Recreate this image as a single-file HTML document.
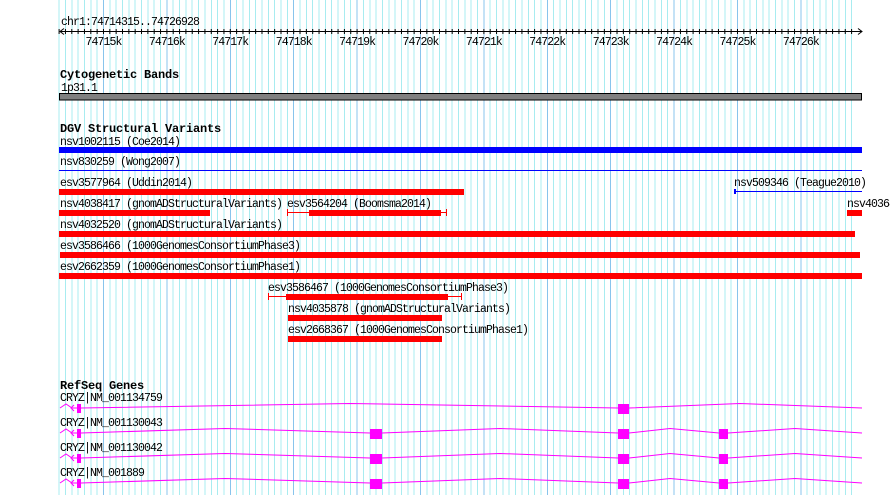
<!DOCTYPE html>
<html><head><meta charset="utf-8"><style>
html,body{margin:0;padding:0;background:#fff;width:890px;height:495px;overflow:hidden}
svg{display:block}
text{font-family:"Liberation Mono",monospace;font-size:11.5px;letter-spacing:-0.9px;fill:#000}
.t{font-weight:bold;font-size:12px;letter-spacing:-0.2px}
</style></head><body>
<svg width="890" height="495" viewBox="0 0 890 495">
<defs>
<path id="g" d="M59.1 0v495m6.34-495v495m6.34-495v495m6.34-495v495m6.34-495v495m6.34-495v495m6.34-495v495m6.34-495v495m6.34-495v495m6.34-495v495
m6.34-495v495m6.34-495v495m6.34-495v495m6.34-495v495m6.34-495v495m6.34-495v495m6.34-495v495m6.34-495v495m6.34-495v495m6.34-495v495
m6.34-495v495m6.34-495v495m6.34-495v495m6.34-495v495m6.34-495v495m6.34-495v495m6.34-495v495m6.34-495v495m6.34-495v495m6.34-495v495
m6.34-495v495m6.34-495v495m6.34-495v495m6.34-495v495m6.34-495v495m6.34-495v495m6.34-495v495m6.34-495v495m6.34-495v495m6.34-495v495
m6.34-495v495m6.34-495v495m6.34-495v495m6.34-495v495m6.34-495v495m6.34-495v495m6.34-495v495m6.34-495v495m6.34-495v495m6.34-495v495
m6.34-495v495m6.34-495v495m6.34-495v495m6.34-495v495m6.34-495v495m6.34-495v495m6.34-495v495m6.34-495v495m6.34-495v495m6.34-495v495
m6.34-495v495m6.34-495v495m6.34-495v495m6.34-495v495m6.34-495v495m6.34-495v495m6.34-495v495m6.34-495v495m6.34-495v495m6.34-495v495
m6.34-495v495m6.34-495v495m6.34-495v495m6.34-495v495m6.34-495v495m6.34-495v495m6.34-495v495m6.34-495v495m6.34-495v495m6.34-495v495
m6.34-495v495m6.34-495v495m6.34-495v495m6.34-495v495m6.34-495v495m6.34-495v495m6.34-495v495m6.34-495v495m6.34-495v495m6.34-495v495
m6.34-495v495m6.34-495v495m6.34-495v495m6.34-495v495m6.34-495v495m6.34-495v495m6.34-495v495m6.34-495v495m6.34-495v495m6.34-495v495
m6.34-495v495m6.34-495v495m6.34-495v495m6.34-495v495m6.34-495v495m6.34-495v495m6.34-495v495m6.34-495v495m6.34-495v495m6.34-495v495
m6.34-495v495m6.34-495v495m6.34-495v495m6.34-495v495m6.34-495v495m6.34-495v495m6.34-495v495m6.34-495v495m6.34-495v495m6.34-495v495
m6.34-495v495m6.34-495v495m6.34-495v495m6.34-495v495m6.34-495v495m6.34-495v495"/>
</defs>
<g shape-rendering="crispEdges">
<use href="#g" stroke="#a8ecf0" stroke-width="1" fill="none"/>
<path d="M103.5 0v495M166.9 0v495M230.3 0v495M293.7 0v495M357.1 0v495M420.5 0v495M483.9 0v495M547.3 0v495M610.7 0v495M674.1 0v495M737.5 0v495M800.9 0v495" stroke="#88c4ec" stroke-width="1"/>
<rect x="862" y="0" width="28" height="495" fill="#fff"/>
<path d="M60 31.5H862" stroke="#000"/>
<use href="#g" stroke="#000" stroke-width="1" fill="none" transform="translate(0,29) scale(1,0.0101)"/>
</g>
<path d="M64 28.5L60 31.5L64 34.5M858 28.5L862 31.5L858 34.5" stroke="#000" fill="none"/>
<text x="61" y="25">chr1:74714315..74726928</text>
<g text-anchor="middle">
<text x="103.5" y="45">74715k</text><text x="166.9" y="45">74716k</text><text x="230.3" y="45">74717k</text><text x="293.7" y="45">74718k</text><text x="357.1" y="45">74719k</text><text x="420.5" y="45">74720k</text><text x="483.9" y="45">74721k</text><text x="547.3" y="45">74722k</text><text x="610.7" y="45">74723k</text><text x="674.1" y="45">74724k</text><text x="737.5" y="45">74725k</text><text x="800.9" y="45">74726k</text>
</g>
<text class="t" x="60" y="78">Cytogenetic Bands</text>
<text x="61" y="91">1p31.1</text>
<rect x="59.5" y="93.5" width="802" height="6.5" fill="#808080" stroke="#000" stroke-width="1"/>

<text class="t" x="60" y="132">DGV Structural Variants</text>
<g shape-rendering="crispEdges">
<text x="60" y="145">nsv1002115 (Coe2014)</text>
<rect x="59" y="147" width="803" height="6" fill="#0000ff"/>
<text x="60" y="165">nsv830259 (Wong2007)</text>
<rect x="59" y="170" width="803" height="1" fill="#0000ff"/>
<text x="60" y="186">esv3577964 (Uddin2014)</text>
<rect x="59" y="189" width="405" height="6" fill="#ff0000"/>
<text x="734" y="186">nsv509346 (Teague2010)</text>
<rect x="734" y="191" width="128" height="1" fill="#0000ff"/>
<rect x="734" y="189" width="2" height="5" fill="#0000ff"/>
<text x="60" y="207">nsv4038417 (gnomADStructuralVariants)</text>
<rect x="59" y="210" width="151" height="6" fill="#ff0000"/>
<text x="287" y="207">esv3564204 (Boomsma2014)</text>
<rect x="287" y="212" width="160" height="1" fill="#ff0000"/>
<rect x="287" y="209" width="1" height="7" fill="#ff0000"/>
<rect x="446" y="209" width="1" height="7" fill="#ff0000"/>
<rect x="309" y="210" width="132" height="6" fill="#ff0000"/>
<text x="847" y="207">nsv40368</text>
<rect x="847" y="210" width="15" height="6" fill="#ff0000"/>
<text x="60" y="228">nsv4032520 (gnomADStructuralVariants)</text>
<rect x="59" y="231" width="796" height="6" fill="#ff0000"/>
<text x="60" y="249">esv3586466 (1000GenomesConsortiumPhase3)</text>
<rect x="60" y="252" width="800" height="6" fill="#ff0000"/>
<text x="60" y="270">esv2662359 (1000GenomesConsortiumPhase1)</text>
<rect x="59" y="273" width="803" height="6" fill="#ff0000"/>
<text x="268" y="291">esv3586467 (1000GenomesConsortiumPhase3)</text>
<rect x="268" y="296" width="194" height="1" fill="#ff0000"/>
<rect x="268" y="293" width="1" height="7" fill="#ff0000"/>
<rect x="461" y="293" width="1" height="7" fill="#ff0000"/>
<rect x="286" y="294" width="162" height="6" fill="#ff0000"/>
<text x="288" y="312">nsv4035878 (gnomADStructuralVariants)</text>
<rect x="288" y="315" width="154" height="6" fill="#ff0000"/>
<text x="288" y="333">esv2668367 (1000GenomesConsortiumPhase1)</text>
<rect x="288" y="336" width="154" height="6" fill="#ff0000"/>
</g>

<text class="t" x="60" y="389">RefSeq Genes</text>
<g fill="none" stroke="#ff00ff" stroke-width="1">
<path d="M60 408L66 404L72 408M74 405L71 408L74 411M72 408H78M81 408L350 403.5L618 408M629 408L740 403.5L862 408"/>
<path d="M60 433L66 429L72 433M74 430L71 433L74 436M72 433H78M81 433L225 428.5L370 433M382 433L500 428.5L618 433M629 433L670 428.5L719 433M728 433L795 428.5L862 433"/>
<path d="M60 458L66 454L72 458M74 455L71 458L74 461M72 458H78M81 458L225 453.5L370 458M382 458L500 453.5L618 458M629 458L670 453.5L719 458M728 458L795 453.5L862 458"/>
<path d="M60 483L66 479L72 483M74 480L71 483L74 486M72 483H78M81 483L225 478.5L370 483M382 483L500 478.5L618 483M629 483L670 478.5L719 483M728 483L795 478.5L862 483"/>
</g>
<g fill="#ff00ff" shape-rendering="crispEdges">
<rect x="77" y="404" width="4" height="9"/><rect x="618" y="404" width="11" height="10"/>
<rect x="77" y="429" width="4" height="9"/><rect x="370" y="429" width="12" height="10"/><rect x="618" y="429" width="11" height="10"/><rect x="719" y="429" width="9" height="10"/>
<rect x="77" y="454" width="4" height="9"/><rect x="370" y="454" width="12" height="10"/><rect x="618" y="454" width="11" height="10"/><rect x="719" y="454" width="9" height="10"/>
<rect x="77" y="479" width="4" height="9"/><rect x="370" y="479" width="12" height="10"/><rect x="618" y="479" width="11" height="10"/><rect x="719" y="479" width="9" height="10"/>
</g>
<text x="60" y="401">CRYZ|NM_001134759</text>
<text x="60" y="426">CRYZ|NM_001130043</text>
<text x="60" y="451">CRYZ|NM_001130042</text>
<text x="60" y="476">CRYZ|NM_001889</text>
</svg>
</body></html>
